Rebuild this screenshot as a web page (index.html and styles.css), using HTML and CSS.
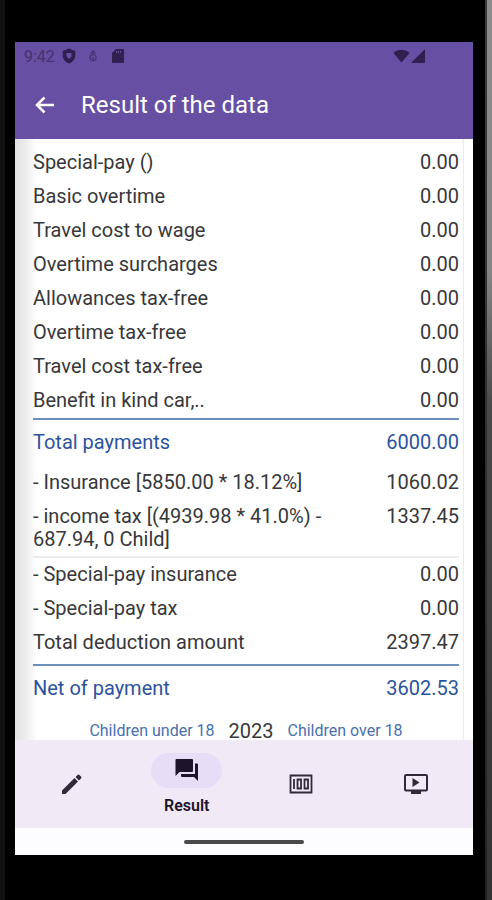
FILE: index.html
```html
<!DOCTYPE html>
<html lang="en">
<head>
<meta charset="utf-8">
<meta name="viewport" content="width=device-width, initial-scale=1">
<title>Result of the data</title>
<link rel="stylesheet" href="styles.css">
</head>
<body>
<div class="device">
  <div class="screen">
    <header class="top">
      <div class="status">
        <span class="clock">9:42</span>
        <svg class="shield" width="14" height="16" viewBox="0 0 14 16" aria-hidden="true"><path fill-rule="evenodd" d="M7 0.5 13.3 3v4.5c0 3.7-2.8 6.8-6.3 8-3.5-1.2-6.3-4.3-6.3-8V3zM4.500 5v3.500l2.500 2.500 2.500-2.500V5z"/></svg>
        <svg class="drop" width="12" height="16" viewBox="0 0 12 16" aria-hidden="true"><path d="M6 2v4M3.500 5.500 6 3l2.500 2.500M6 6.500a3 3 0 1 0 .1 0M6 9v2" fill="none" stroke="currentColor" stroke-width="1.500"/></svg>
        <svg class="card" width="12" height="14" viewBox="0 0 12 14" aria-hidden="true"><path fill-rule="evenodd" d="M4 0h7q1 0 1 1v12q0 1-1 1H1q-1 0-1-1V4zM4 2v2h1V2zm2 0v2h1V2zm2 0v2h1V2z"/></svg>
        <span class="signals">
          <svg width="17" height="14" viewBox="0 0 17 14" aria-hidden="true"><path d="M.5 4C5-.4 12-.4 16.500 4l-8 9.500z"/></svg>
          <svg width="14" height="14" viewBox="0 0 14 14" aria-hidden="true"><path d="M14 0v14H0z"/></svg>
        </span>
      </div>
      <div class="appbar">
        <button class="back" type="button" aria-label="Back">
          <svg width="20" height="18" viewBox="0 0 20 18" aria-hidden="true"><path d="M19 9H2M9.500 1.500 2 9l7.500 7.500" fill="none" stroke="currentColor" stroke-width="2.500"/></svg>
        </button>
        <h1>Result of the data</h1>
      </div>
    </header>

    <main class="content">
      <table class="results">
        <tbody>
          <tr><th scope="row">Special-pay ()</th><td>0.00</td></tr>
          <tr><th scope="row">Basic overtime</th><td>0.00</td></tr>
          <tr><th scope="row">Travel cost to wage</th><td>0.00</td></tr>
          <tr><th scope="row">Overtime surcharges</th><td>0.00</td></tr>
          <tr><th scope="row">Allowances tax-free</th><td>0.00</td></tr>
          <tr><th scope="row">Overtime tax-free</th><td>0.00</td></tr>
          <tr><th scope="row">Travel cost tax-free</th><td>0.00</td></tr>
          <tr><th scope="row">Benefit in kind car,..</th><td>0.00</td></tr>
        </tbody>
        <tbody>
          <tr class="total"><th scope="row">Total payments</th><td>6000.00</td></tr>
          <tr><th scope="row">- Insurance [5850.00 * 18.12%]</th><td>1060.02</td></tr>
          <tr class="divided"><th scope="row">- income tax [(4939.98 * 41.0%) - 687.94, 0 Child]</th><td>1337.45</td></tr>
          <tr><th scope="row">- Special-pay insurance</th><td>0.00</td></tr>
          <tr><th scope="row">- Special-pay tax</th><td>0.00</td></tr>
          <tr class="last"><th scope="row">Total deduction amount</th><td>2397.47</td></tr>
          <tr class="total"><th scope="row">Net of payment</th><td>3602.53</td></tr>
        </tbody>
      </table>
      <div class="children">
        <span>Children under 18</span><strong>2023</strong><span>Children over 18</span>
      </div>
    </main>

    <nav class="tabs">
      <a href="#edit" aria-label="Edit">
        <svg width="22" height="22" viewBox="0 0 22 22" aria-hidden="true"><path d="M1 17.500 13.500 5l3.500 3.500L4.500 21H1zM14.500 4l2-2q1-1 2 0L20 3.500q1 1 0 2l-2 2z"/></svg>
      </a>
      <a href="#result" class="active" aria-current="page">
        <span class="pill"><svg width="24" height="22" viewBox="0 0 24 22" aria-hidden="true"><path d="M.5 1q0-1 1-1h15.500q1 0 1 1v11q0 1-1 1H4.500l-4 4zM20 4.500h2q1 0 1 1V22l-4-4H7q-1 0-1-1v-2h14z"/></svg></span>
        <span class="label">Result</span>
      </a>
      <a href="#money" aria-label="Money">
        <svg width="24" height="20" viewBox="0 0 24 20" aria-hidden="true"><path d="M1.500 1.500h21v17h-21zM5 5v10M8.500 5.500h3.500v9H8.500zM15.500 5.500H19v9h-3.500z" fill="none" stroke="currentColor" stroke-width="1.800"/></svg>
      </a>
      <a href="#video" aria-label="Video">
        <svg width="26" height="22" viewBox="0 0 26 22" aria-hidden="true"><rect x="2" y="2" width="22" height="15.500" rx="1" fill="none" stroke="currentColor" stroke-width="2"/><path d="M9.500 5v9l7-4.500zM8 18h10v3H8z"/></svg>
      </a>
    </nav>
    <div class="gesture"><span></span></div>
  </div>
</div>
</body>
</html>
```
FILE: styles.css
```css
* {
  box-sizing: border-box;
}

body {
  margin: 0;
  font-family: Roboto, "Liberation Sans", sans-serif;
  color: #38383a;
  background: #000;
}

svg {
  display: block;
  fill: currentColor;
}

.device {
  height: 100vh;
  padding: 42px 19px 45px 15px;
  background:
    linear-gradient(#8c8c8c, #858585 30%, #4a4a4a 45%, #333) right / 5px 100% no-repeat,
    linear-gradient(#3c3c3c, #222) right / 7px 100% no-repeat,
    linear-gradient(#121212, #121212) left / 5px 100% no-repeat,
    #000;
}

.screen {
  display: flex;
  flex-direction: column;
  height: 100%;
  background: #fdfcfe;
}

.top {
  background: #674fa3;
  color: #fff;
}

.status {
  display: flex;
  align-items: center;
  height: 28px;
  padding: 0 48px 0 9px;
  color: #2f2050;
}

.clock {
  font-size: 16px;
  color: #44326f;
}

.shield {
  margin-left: 7px;
}

.drop {
  margin-left: 11px;
  color: #49377a;
}

.card {
  margin-left: 13px;
}

.signals {
  display: flex;
  gap: 1px;
  margin-left: auto;
}

.appbar {
  display: flex;
  align-items: center;
  gap: 26px;
  height: 69px;
  padding: 0 20px;
}

.back {
  padding: 0;
  border: 0;
  background: none;
  color: #fff;
}

h1 {
  margin: 0;
  font-size: 24px;
  font-weight: 400;
}

.content {
  flex: 1;
  min-height: 0;
  overflow: hidden;
  padding: 7px 14px 0 18px;
  background: linear-gradient(90deg, #e2e2e2, #ececec 10px, #fff 22px, #fff calc(100% - 10px), #ebebeb calc(100% - 10px), #ebebeb calc(100% - 9px), #fff calc(100% - 9px));
}

.results {
  width: 100%;
  border-collapse: separate;
  border-spacing: 0;
  font-size: 20px;
  line-height: 23px;
}

.results th,
.results td {
  height: 34px;
  padding: 5px 0;
  font-weight: 400;
  text-align: left;
  vertical-align: top;
}

.results td {
  text-align: right;
}

.results .total th,
.results .total td {
  height: 48px;
  padding: 11px 0;
  border-top: 2px solid #6c8fbe;
  color: #2c539d;
}

.results .divided th,
.results .divided td {
  border-bottom: 2px solid #ebebeb;
}

.results .last th,
.results .last td {
  height: 38px;
}

.children {
  display: flex;
  justify-content: center;
  align-items: center;
  gap: 14px;
  padding-top: 9px;
  font-size: 16px;
  line-height: 20px;
  color: #4a70b0;
}

.children strong {
  font-size: 20px;
  font-weight: 400;
  color: #38383a;
}

.tabs {
  display: grid;
  grid-template-columns: repeat(4, 1fr);
  height: 88px;
  background: #f1eaf6;
}

.tabs a {
  display: flex;
  flex-direction: column;
  align-items: center;
  justify-content: center;
  color: #302a38;
  text-decoration: none;
}

.tabs .active {
  gap: 8px;
  color: #1c142b;
}

.pill {
  display: grid;
  place-items: center;
  width: 71px;
  height: 35px;
  border-radius: 18px;
  background: #e7ddf7;
}

.label {
  font-size: 16px;
  font-weight: 600;
  line-height: 20px;
}

.gesture {
  display: grid;
  place-items: center;
  height: 27px;
}

.gesture span {
  width: 120px;
  height: 4px;
  border-radius: 2px;
  background: #4b4b4b;
}
```
